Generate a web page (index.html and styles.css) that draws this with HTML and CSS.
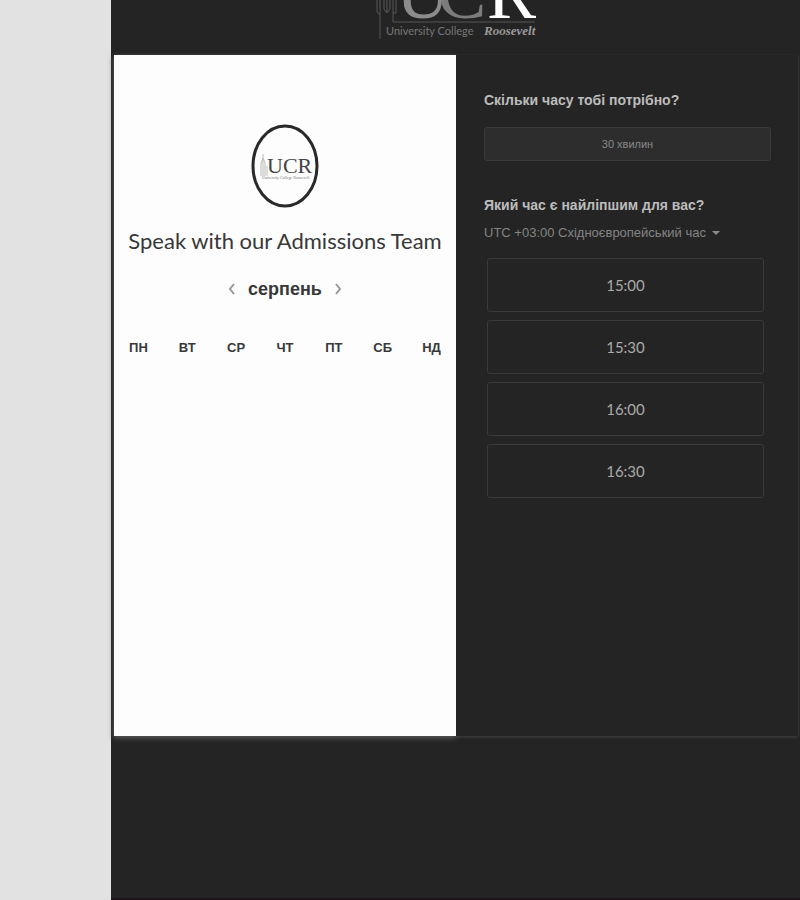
FILE: index.html
```
<!DOCTYPE html>
<html lang="uk">
<head>
<meta charset="utf-8">
<meta name="viewport" content="width=device-width, initial-scale=1">
<title>Speak with our Admissions Team</title>
<link rel="stylesheet" href="styles.css">
</head>
<body>
<div class="page">
  <main class="scheduler">
    <header class="brand">
      <svg class="brand-logo" viewBox="0 0 160 56" role="img" aria-label="University College Roosevelt">
        <g fill="none" stroke="#565656">
          <path d="M1 0v12l3 3v24M4 0v15M8 0v9l3 4 3-4V0M11 0v13M17 0v22h142M20 0v13h-3"/>
        </g>
        <g class="logo-letters">
          <text x="20" y="18" fill="#8c8c8c">U</text>
          <text x="61" y="18" fill="#7c7c7c">C</text>
          <text x="111" y="18" fill="#fff">R</text>
        </g>
        <text class="logo-name" x="10" y="35">University College</text>
        <text class="logo-roosevelt" x="108" y="35">Roosevelt</text>
      </svg>
    </header>
    <div class="card">
      <section class="calendar">
        <svg class="avatar" viewBox="0 0 70 86" role="img" aria-label="UCR">
          <ellipse cx="35" cy="43" rx="32" ry="40" fill="#fdfdfd" stroke="#292929" stroke-width="3"/>
          <path d="M11 53V40l2-5 2 5v13M13 31v22M17 53V43" fill="none" stroke="#bbb"/>
          <text class="avatar-letters" x="17" y="50">UCR</text>
          <text class="avatar-name" x="12" y="56">University College Roosevelt</text>
        </svg>
        <h1>Speak with our Admissions Team</h1>
        <div class="month">
          <button type="button" aria-label="Попередній місяць"><svg viewBox="0 0 8 12"><path d="M6 1 2 6l4 5"/></svg></button>
          <h2>серпень</h2>
          <button type="button" aria-label="Наступний місяць"><svg viewBox="0 0 8 12"><path d="m2 1 4 5-4 5"/></svg></button>
        </div>
        <table class="weekdays">
          <thead><tr><th scope="col">ПН</th><th scope="col">ВТ</th><th scope="col">СР</th><th scope="col">ЧТ</th><th scope="col">ПТ</th><th scope="col">СБ</th><th scope="col">НД</th></tr></thead>
        </table>
      </section>
      <section class="options">
        <h3>Скільки часу тобі потрібно?</h3>
        <button type="button" class="duration">30 хвилин</button>
        <h3><label for="zone">Який час є найліпшим для вас?</label></h3>
        <div class="zone">
          <select id="zone"><option>UTC +03:00 Східноєвропейський час</option></select>
          <svg viewBox="0 0 8 4" aria-hidden="true"><path d="M0 0h8L4 4z"/></svg>
        </div>
        <div class="times">
          <button type="button">15:00</button>
          <button type="button">15:30</button>
          <button type="button">16:00</button>
          <button type="button">16:30</button>
        </div>
      </section>
    </div>
  </main>
</div>
</body>
</html>
```
FILE: styles.css
```
* { box-sizing: border-box; }

body {
  margin: 0;
  background: #e2e2e2;
  color: #383838;
  font-family: "Liberation Sans", sans-serif;
}

button, select { font: inherit; cursor: pointer; }
h1, h2, h3 { margin: 0; }

.page {
  display: flex;
  min-height: 100vh;
  padding-left: 111px;
}

.scheduler {
  flex: 1;
  min-width: 0;
  display: flex;
  flex-direction: column;
  padding: 0 2px 162px 3px;
  background: #242424;
  border-bottom: 2px solid #1b1519;
}

.brand {
  display: flex;
  justify-content: center;
  height: 55px;
}
.brand-logo { width: 160px; height: 56px; }
.logo-letters { font: 74px "Liberation Serif", serif; }
.logo-name { font: 11px Lato, sans-serif; fill: #777; }
.logo-roosevelt { font: italic bold 13px "Liberation Serif", serif; fill: #999; }

.card {
  flex: 1;
  display: grid;
  grid-template-columns: 1fr 1fr;
  box-shadow: 0 1px 3px #444;
}

.calendar {
  display: flex;
  flex-direction: column;
  align-items: center;
  padding-top: 68px;
  background: #fdfdfd;
  box-shadow: 0 2px 6px #555;
}
.avatar { width: 70px; height: 86px; }
.avatar-letters { font: 22px "Liberation Serif", serif; fill: #444; }
.avatar-name { font: 4px "Liberation Serif", serif; fill: #777; }

h1 {
  margin-top: 16px;
  font: 22px/32px Lato, sans-serif;
  white-space: nowrap;
}

.month {
  display: flex;
  align-items: center;
  gap: 12px;
  margin-top: 16px;
}
.month h2 { font-size: 18px; line-height: 32px; }
.month button {
  display: flex;
  padding: 0;
  border: 0;
  background: none;
}
.month svg {
  width: 8px;
  height: 12px;
  fill: none;
  stroke: #999;
  stroke-width: 2;
}

.weekdays {
  width: 100%;
  margin-top: 33px;
  border-collapse: collapse;
  table-layout: fixed;
}
.weekdays th { padding: 0; font-size: 13px; line-height: 20px; }

.options {
  display: flex;
  flex-direction: column;
  padding: 33px 27px 32px 28px;
  background: #242424;
}
h3 {
  color: #bcbcbc;
  font-size: 14px;
  line-height: 24px;
}
.duration {
  height: 34px;
  margin: 15px 0 32px;
  border: 1px solid #3a3a3a;
  border-radius: 3px;
  background: #2d2d2d;
  color: #898989;
  font-size: 11px;
}

.zone {
  display: flex;
  align-items: center;
  gap: 6px;
  margin-top: 4px;
}
.zone select {
  appearance: none;
  padding: 0;
  border: 0;
  background: transparent;
  color: #858585;
  font-size: 13px;
  line-height: 24px;
}
.zone svg { width: 8px; height: 4px; fill: #8a8a8a; }

.times {
  display: grid;
  gap: 8px;
  margin: 13px 7px 0 3px;
}
.times button {
  height: 54px;
  padding-bottom: 2px;
  border: 1px solid #3a3a3a;
  border-radius: 3px;
  background: transparent;
  color: #aaa;
  font: 15px Lato, sans-serif;
}
```
